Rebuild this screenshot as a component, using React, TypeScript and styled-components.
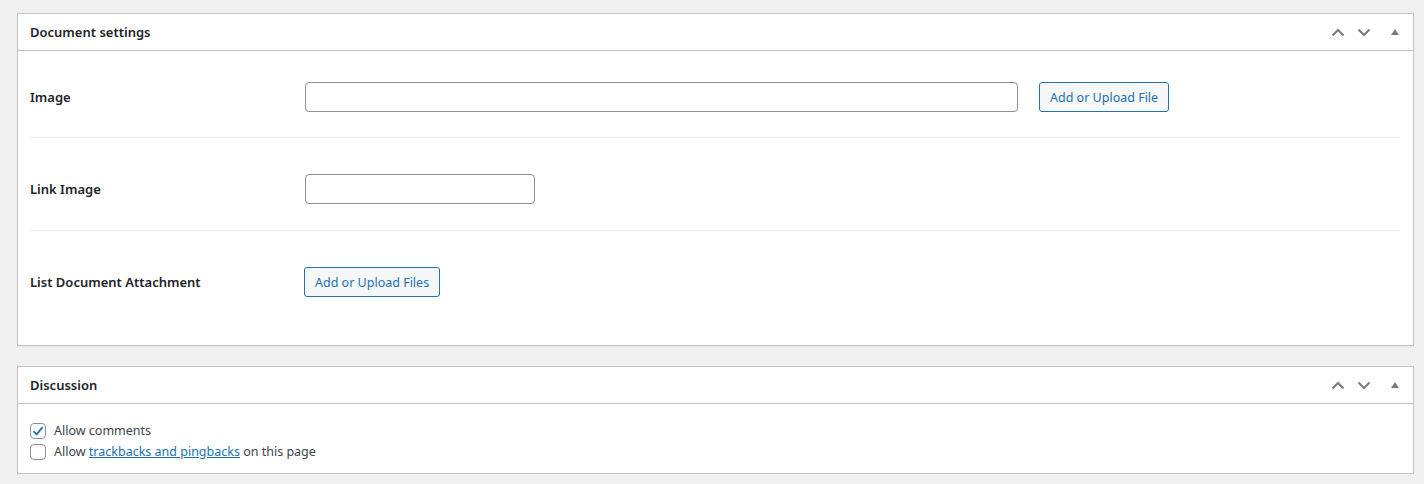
import styled, { createGlobalStyle } from 'styled-components';

const GlobalStyle = createGlobalStyle`
  html, body {
    margin: 0;
    padding: 0;
    background: #f0f0f1;
    font-family: "Noto Sans", "Open Sans", sans-serif;
    color: #3c434a;
    font-size: 12.5px;
  }
`

const Page = styled.div`
  display: flex;
  flex-direction: column;
  gap: 20px;
  padding: 13px 10px 0 17px;
`

const Box = styled.div`
  background: #fff;
  border: 1px solid #c3c4c7;
  box-shadow: 0 1px 1px rgba(0, 0, 0, 0.04);
`

const BoxHeader = styled.div`
  display: flex;
  align-items: center;
  height: 36px;
  padding: 0 0 0 12px;
  border-bottom: 1px solid #c3c4c7;
`

const BoxTitle = styled.h2`
  flex: 1;
  margin: 0;
  font-size: 13px;
  font-weight: 600;
  color: #1d2327;
`

const Handles = styled.div`
  display: flex;
  align-items: center;
  height: 100%;
`

const HandleButton = styled.span<{ $w: number }>`
  display: flex;
  align-items: center;
  justify-content: center;
  width: ${p => p.$w}px;
  height: 100%;
  color: #787c82;
`

const Inside = styled.div<{ $compact?: boolean }>`
  padding: ${p => (p.$compact ? '16px 12px 11px' : '0 12px 22px')};
`

const FieldRow = styled.div<{ $first?: boolean; $last?: boolean }>`
  display: flex;
  align-items: center;
  padding: ${p => (p.$first ? '31px 0 25px' : '36px 0 26px')};
  border-bottom: ${p => (p.$last ? 'none' : '1px solid #f0f0f1')};
`

const Label = styled.label<{ $w?: number }>`
  width: ${p => p.$w ?? 275}px;
  flex-shrink: 0;
  font-size: 13px;
  font-weight: 600;
  color: #1d2327;
`

const TextInput = styled.input<{ $w: number }>`
  box-sizing: border-box;
  width: ${p => p.$w}px;
  height: 30px;
  margin: 0;
  padding: 0 8px;
  border: 1px solid #8c8f94;
  border-radius: 4px;
  background: #fff;
  font: inherit;
`

const Button = styled.button<{ $ml?: number }>`
  box-sizing: border-box;
  height: 30px;
  margin: 0 0 0 ${p => p.$ml ?? 0}px;
  padding: 0 10px;
  border: 1px solid #2271b1;
  border-radius: 3px;
  background: #f6f7f7;
  color: #2271b1;
  font-family: inherit;
  font-size: 12.5px;
  cursor: pointer;
`

const CheckLine = styled.label`
  display: flex;
  align-items: center;
  height: 21px;
  gap: 8px;
  color: #3c434a;
`

const CheckBox = styled.span`
  box-sizing: border-box;
  display: flex;
  align-items: center;
  justify-content: center;
  width: 16px;
  height: 16px;
  border: 1px solid #8c8f94;
  border-radius: 4px;
  background: #fff;
  color: #2271b1;
`

const Link = styled.a`
  color: #2271b1;
  text-decoration: underline;
`

const ChevronUp = () => (
  <svg width="14" height="9" viewBox="0 0 14 9">
    <path d="M1.5 7.5 L7 2 L12.5 7.5" fill="none" stroke="currentColor" strokeWidth="2" />
  </svg>
)

const ChevronDown = () => (
  <svg width="14" height="9" viewBox="0 0 14 9">
    <path d="M1.5 1.5 L7 7 L12.5 1.5" fill="none" stroke="currentColor" strokeWidth="2" />
  </svg>
)

const Triangle = () => (
  <svg width="8" height="6" viewBox="0 0 8 6">
    <path d="M0 6 L4 0 L8 6 Z" fill="currentColor" />
  </svg>
)

const Check = () => (
  <svg width="14" height="14" viewBox="0 0 14 14">
    <path d="M2.5 7.2 L5.6 10.3 L11.6 3.2" fill="none" stroke="currentColor" strokeWidth="1.9" />
  </svg>
)

const BoxHead = ({ title }: { title: string }) => (
  <BoxHeader>
    <BoxTitle>{title}</BoxTitle>
    <Handles>
      <HandleButton $w={26}><ChevronUp /></HandleButton>
      <HandleButton $w={26}><ChevronDown /></HandleButton>
      <HandleButton $w={36}><Triangle /></HandleButton>
    </Handles>
  </BoxHeader>
)

const App: React.FC = () => {
  return (
    <>
      <GlobalStyle />
      <Page>
        <Box>
          <BoxHead title="Document settings" />
          <Inside>
            <FieldRow $first>
              <Label>Image</Label>
              <TextInput $w={713} />
              <Button $ml={21}>Add or Upload File</Button>
            </FieldRow>
            <FieldRow>
              <Label>Link Image</Label>
              <TextInput $w={230} />
            </FieldRow>
            <FieldRow $last>
              <Label $w={274}>List Document Attachment</Label>
              <Button>Add or Upload Files</Button>
            </FieldRow>
          </Inside>
        </Box>

        <Box>
          <BoxHead title="Discussion" />
          <Inside $compact>
            <CheckLine>
              <CheckBox><Check /></CheckBox>
              Allow comments
            </CheckLine>
            <CheckLine>
              <CheckBox />
              <span>Allow <Link href="#">trackbacks and pingbacks</Link> on this page</span>
            </CheckLine>
          </Inside>
        </Box>
      </Page>
    </>
  )
}

export default App
